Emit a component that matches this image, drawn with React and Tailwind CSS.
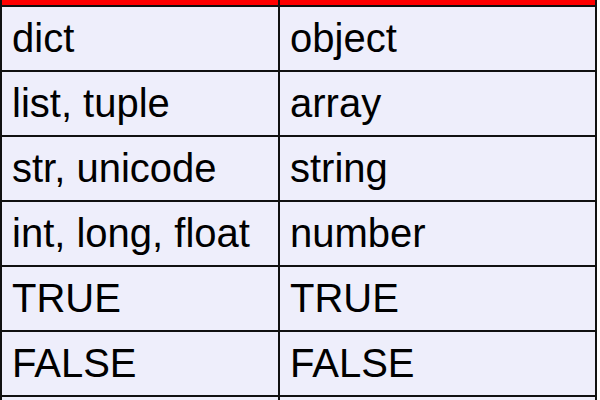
const rows = [
	["dict", "object"],
	["list, tuple", "array"],
	["str, unicode", "string"],
	["int, long, float", "number"],
	["TRUE", "TRUE"],
	["FALSE", "FALSE"],
	["", ""],
];

export default function App() {
	return (
		<div className="w-[600px] h-[400px] overflow-hidden bg-white" style={{fontFamily: '"Liberation Sans", Arial, sans-serif'}}>
			<div className="w-[597px] border-x-2 border-[#111]">
				<div className="flex h-[5px] bg-[#ff0000]">
					<div className="w-[276px]" />
					<div className="flex-1 border-l-2 border-[#111]" />
				</div>
				{rows.map((row, i) => (
					<div key={i} className="flex h-[65px] border-t-2 border-[#111] bg-[#eeeefb] text-[40px] leading-none text-black">
						<div className="w-[276px] flex items-center pl-[10px] pb-[2px]">{row[0]}</div>
						<div className="flex-1 flex items-center pl-[10px] pb-[2px] border-l-2 border-[#111]">{row[1]}</div>
					</div>
				))}
			</div>
		</div>
	);
}
